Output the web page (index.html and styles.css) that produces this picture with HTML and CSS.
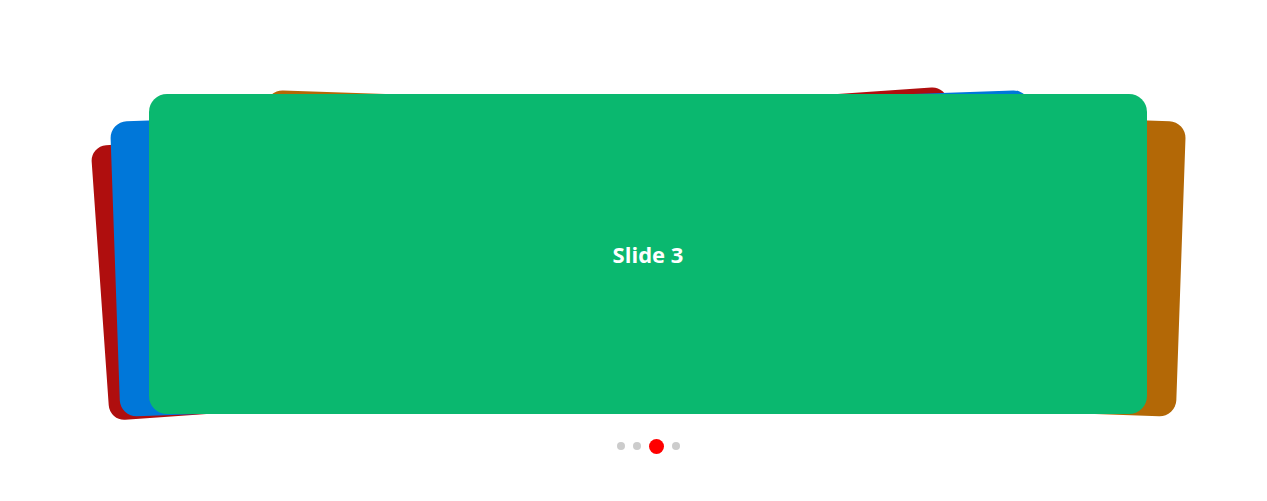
FILE: index.html
```html
<!DOCTYPE html>
<html lang="en">
<head>
<meta charset="utf-8">
<title>Cards carousel</title>
<link rel="stylesheet" href="styles.css">
</head>
<body>
<div class="page">
  <div class="carousel">
    <div class="stack">
      <div class="card card-1 depth-2">Slide 1</div>
      <div class="card card-2 depth-prev">Slide 2</div>
      <div class="card card-4 depth-next">Slide 4</div>
      <div class="card card-3 active">Slide 3</div>
    </div>
    <div class="pagination">
      <span class="dot"></span>
      <span class="dot"></span>
      <span class="dot dot-active"></span>
      <span class="dot"></span>
    </div>
  </div>
</div>
</body>
</html>
```
FILE: styles.css
```css
html, body {
  margin: 0;
  padding: 0;
  background: #ffffff;
}

.page {
  padding: 94px 0 0 149px;
  font-family: "Open Sans", "Noto Sans", sans-serif;
}

.carousel {
  width: 998px;
  display: flex;
  flex-direction: column;
  align-items: center;
}

.stack {
  display: grid;
  width: 998px;
  height: 320px;
}

.card {
  grid-area: 1 / 1;
  border-radius: 18px;
  display: flex;
  align-items: center;
  justify-content: center;
  color: #ffffff;
  font-size: 22px;
  font-weight: 700;
  transform-origin: 50% 50%;
}

.card-1 {
  background: #af0e0e;
  color: transparent;
}

.card-2 {
  background: #0077d9;
  color: transparent;
}

.card-3 {
  background: #0ab86f;
}

.card-4 {
  background: #b36806;
  color: transparent;
}

.depth-2 {
  z-index: 1;
  transform: translate(-119.7px, -0.4px) rotate(-4deg) scale(0.86);
}

.depth-prev {
  z-index: 2;
  transform: translate(-73px, -0.7px) rotate(-2deg) scale(0.922);
}

.depth-next {
  z-index: 2;
  transform: translate(73.1px, -0.7px) rotate(2deg) scale(0.922);
}

.active {
  z-index: 3;
}

.pagination {
  margin-top: 24px;
  height: 16px;
  display: flex;
  align-items: center;
  gap: 8px;
}

.dot {
  width: 8px;
  height: 8px;
  border-radius: 50%;
  background: #cccccc;
}

.dot-active {
  width: 15px;
  height: 15px;
  background: #ff0000;
}
```
